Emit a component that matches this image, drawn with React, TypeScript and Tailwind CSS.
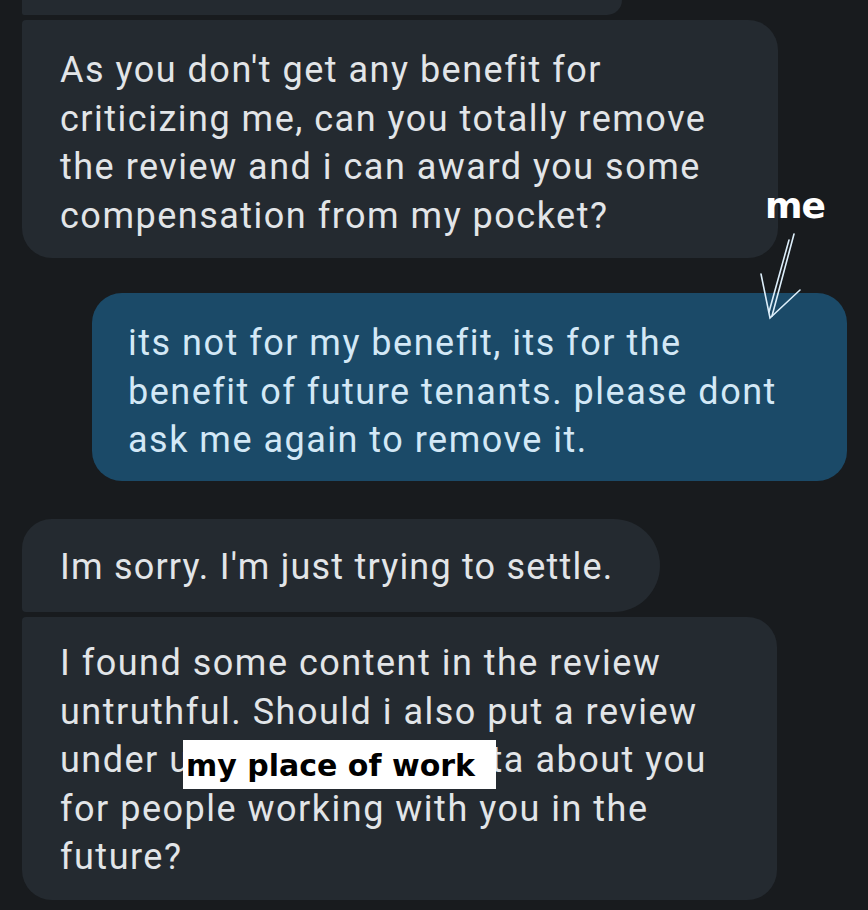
import React from "react";

const GREY = "bg-[#242a30]";

function Lines({ lines }: { lines: React.ReactNode[] }) {
  return (
    <div className="flex flex-col">
      {lines.map((l, i) => (
        <div key={i} className="relative h-[48.5px] whitespace-nowrap">
          {l}
        </div>
      ))}
    </div>
  );
}

export default function App() {
  return (
    <div className="relative h-[910px] w-[868px] overflow-hidden bg-[#181b1e] font-['Roboto',sans-serif] text-[36px] leading-[48.5px] tracking-[1.5px] text-[#e2e5e8]">
      <div className="flex flex-col">
        {/* tail of the previous message */}
        <div className={`ml-[22px] h-[15px] w-[600px] rounded-bl-[4px] rounded-br-[30px] ${GREY}`} />

        <div className={`ml-[22px] mt-[5px] w-[756px] rounded-[30px] rounded-tl-[4px] pl-[38px] pt-[26px] pb-[18px] ${GREY}`}>
          <Lines
            lines={[
              "As you don't get any benefit for",
              "criticizing me, can you totally remove",
              "the review and i can award you some",
              "compensation from my pocket?",
            ]}
          />
        </div>

        <div className="ml-[92px] mt-[35px] w-[755px] rounded-[30px] bg-[#1b4a68] pl-[36px] pt-[26px] pb-[16px] text-[#d3e8f6]">
          <Lines
            lines={[
              "its not for my benefit, its for the",
              "benefit of future tenants. please dont",
              "ask me again to remove it.",
            ]}
          />
        </div>

        <div className={`ml-[22px] mt-[38px] w-[638px] rounded-[30px] rounded-r-[47px] rounded-bl-[4px] pl-[38px] pt-[24px] pb-[21px] tracking-[1.2px] ${GREY}`}>
          <Lines lines={["Im sorry. I'm just trying to settle."]} />
        </div>

        <div className={`ml-[22px] mt-[5px] w-[755px] rounded-[30px] rounded-tl-[4px] pl-[38px] pt-[22px] pb-[18px] ${GREY}`}>
          <Lines
            lines={[
              "I found some content in the review",
              "untruthful. Should i also put a review",
              <>
                under u<span className="inline-block w-[300px]" />ta about you
                {/* redaction sticker */}
                <div className="absolute left-[123px] top-[4px] flex h-[49px] w-[313px] items-center bg-white pl-[3px] pt-[4px] font-['DejaVu_Sans',sans-serif] text-[30px] font-bold tracking-[0px] text-black">
                  my place of work
                </div>
              </>,
              "for people working with you in the",
              "future?",
            ]}
          />
        </div>
      </div>

      {/* annotation */}
      <div className="absolute left-[765px] top-[186px] font-['DejaVu_Sans',sans-serif] text-[36px] font-bold leading-[40px] tracking-[-1px] text-white">
        me
      </div>
      <svg className="absolute left-0 top-0" width="868" height="910" viewBox="0 0 868 910" fill="none">
        <g stroke="#dceefa" strokeWidth="1.6" strokeLinecap="round">
          <path d="M794 234 L772 316" />
          <path d="M789 240 L769 312" />
          <path d="M761 274 L770 318 L800 290" />
        </g>
      </svg>
    </div>
  );
}
